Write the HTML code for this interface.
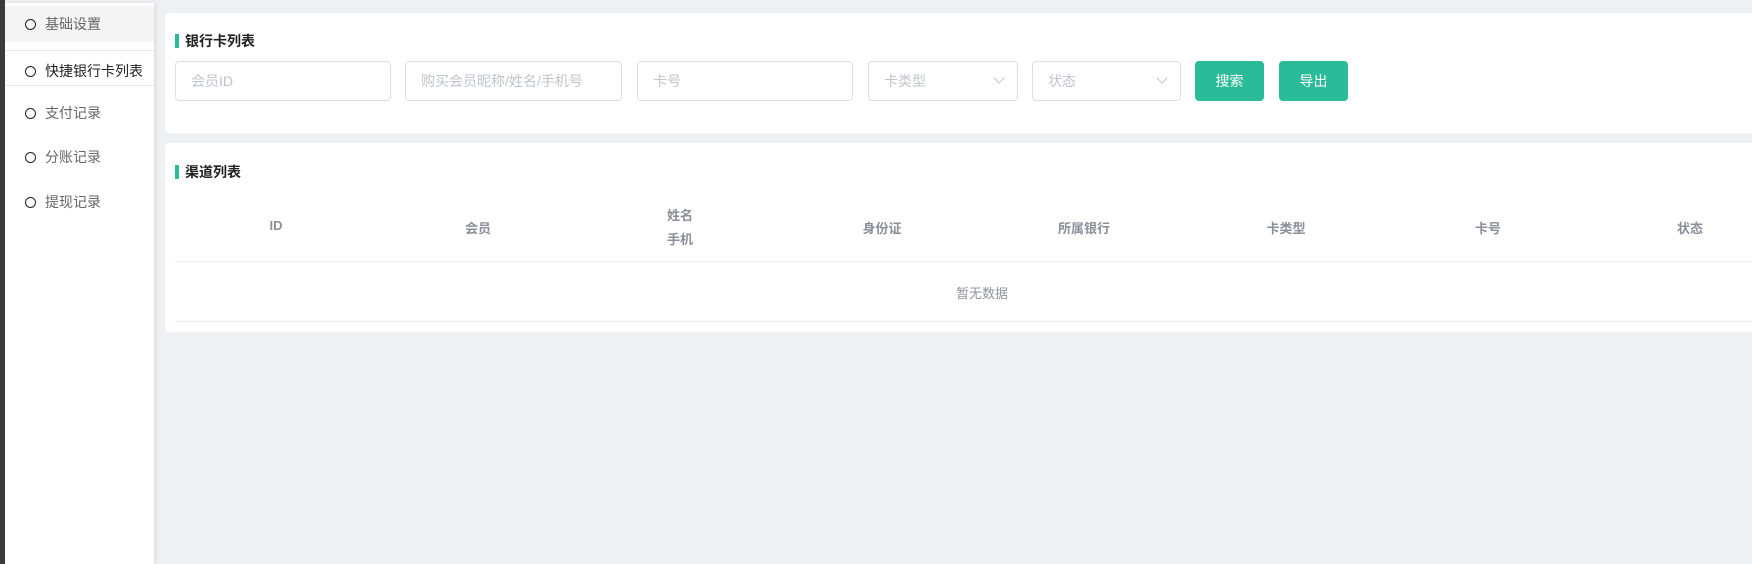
<!DOCTYPE html>
<html><head><meta charset="utf-8"><style>
*{box-sizing:border-box;margin:0;padding:0}
body{width:1752px;height:564px;overflow:hidden;background:#eef1f4;font-family:"Liberation Sans","Noto Sans CJK SC",sans-serif;position:relative}
.dark{position:absolute;left:0;top:0;width:5px;height:564px;background:#3b3b3b}
.side{position:absolute;left:5px;top:3px;width:149px;height:561px;background:#fff;box-shadow:2px 0 4px rgba(0,0,0,.08)}
.it{position:absolute;left:0;width:149px;height:36px;font-size:14px;color:#666;line-height:36px}
.it i{position:absolute;left:20px;top:13px;width:11px;height:11px;border:1.6px solid #222;border-radius:50%}
.it span{position:absolute;left:40px}
.sep{position:absolute;left:0;width:149px;height:1px;background:#e8e8e8}
.card{position:absolute;left:165px;width:1600px;background:#fff;border-radius:4px}
.ttl{position:absolute;left:10px;font-size:14px;font-weight:bold;color:#222;padding-left:10px;line-height:16px}
.ttl:before{content:"";position:absolute;left:0;top:1px;width:4px;height:14px;background:#2bbb98}
.inp{position:absolute;top:48px;height:40px;border:1px solid #dcdfe6;border-radius:4px;font-size:14px;color:#c0c4cc;line-height:38px;padding-left:15px}
.arr{position:absolute;right:14px;top:12px;width:8px;height:8px;border-right:1px solid #c0c4cc;border-bottom:1px solid #c0c4cc;transform:rotate(45deg)}
.btn{position:absolute;top:48px;height:40px;width:69px;background:#2bbb98;color:#fff;border-radius:4px;font-size:14px;text-align:center;line-height:40px}
.th{position:absolute;width:202px;text-align:center;font-size:13px;font-weight:bold;color:#8a8f99}
</style></head><body>
<div class="dark"></div>
<div class="side">
<div class="it" style="top:3px;background:#f4f4f4"><i></i><span>基础设置</span></div>
<div class="sep" style="top:47px"></div>
<div class="it" style="top:50px;color:#222"><i></i><span>快捷银行卡列表</span></div>
<div class="sep" style="top:82px"></div>
<div class="it" style="top:92px"><i></i><span>支付记录</span></div>
<div class="it" style="top:136px"><i></i><span>分账记录</span></div>
<div class="it" style="top:181px"><i></i><span>提现记录</span></div>
</div>
<div class="card" style="top:13px;height:120px">
<div class="ttl" style="top:20px">银行卡列表</div>
<div class="inp" style="left:10px;width:216px">会员ID</div>
<div class="inp" style="left:240px;width:217px">购买会员昵称/姓名/手机号</div>
<div class="inp" style="left:472px;width:216px">卡号</div>
<div class="inp" style="left:703px;width:150px">卡类型<div class="arr"></div></div>
<div class="inp" style="left:867px;width:149px">状态<div class="arr"></div></div>
<div class="btn" style="left:1030px">搜索</div>
<div class="btn" style="left:1114px">导出</div>
</div>
<div class="card" style="top:143px;height:189px">
<div class="ttl" style="top:21px">渠道列表</div>
<div class="th" style="left:10px;top:75px">ID</div>
<div class="th" style="left:212px;top:75px">会员</div>
<div class="th" style="left:414px;top:61px;line-height:24px">姓名<br>手机</div>
<div class="th" style="left:616px;top:75px">身份证</div>
<div class="th" style="left:818px;top:75px">所属银行</div>
<div class="th" style="left:1020px;top:75px">卡类型</div>
<div class="th" style="left:1222px;top:75px">卡号</div>
<div class="th" style="left:1424px;top:75px">状态</div>
<div style="position:absolute;left:10px;top:118px;width:1600px;height:1px;background:#ebeef5"></div>
<div style="position:absolute;left:10px;top:140px;width:1614px;text-align:center;font-size:13px;color:#909399">暂无数据</div>
<div style="position:absolute;left:10px;top:178px;width:1600px;height:1px;background:#ebeef5"></div>
</div>
</body></html>
